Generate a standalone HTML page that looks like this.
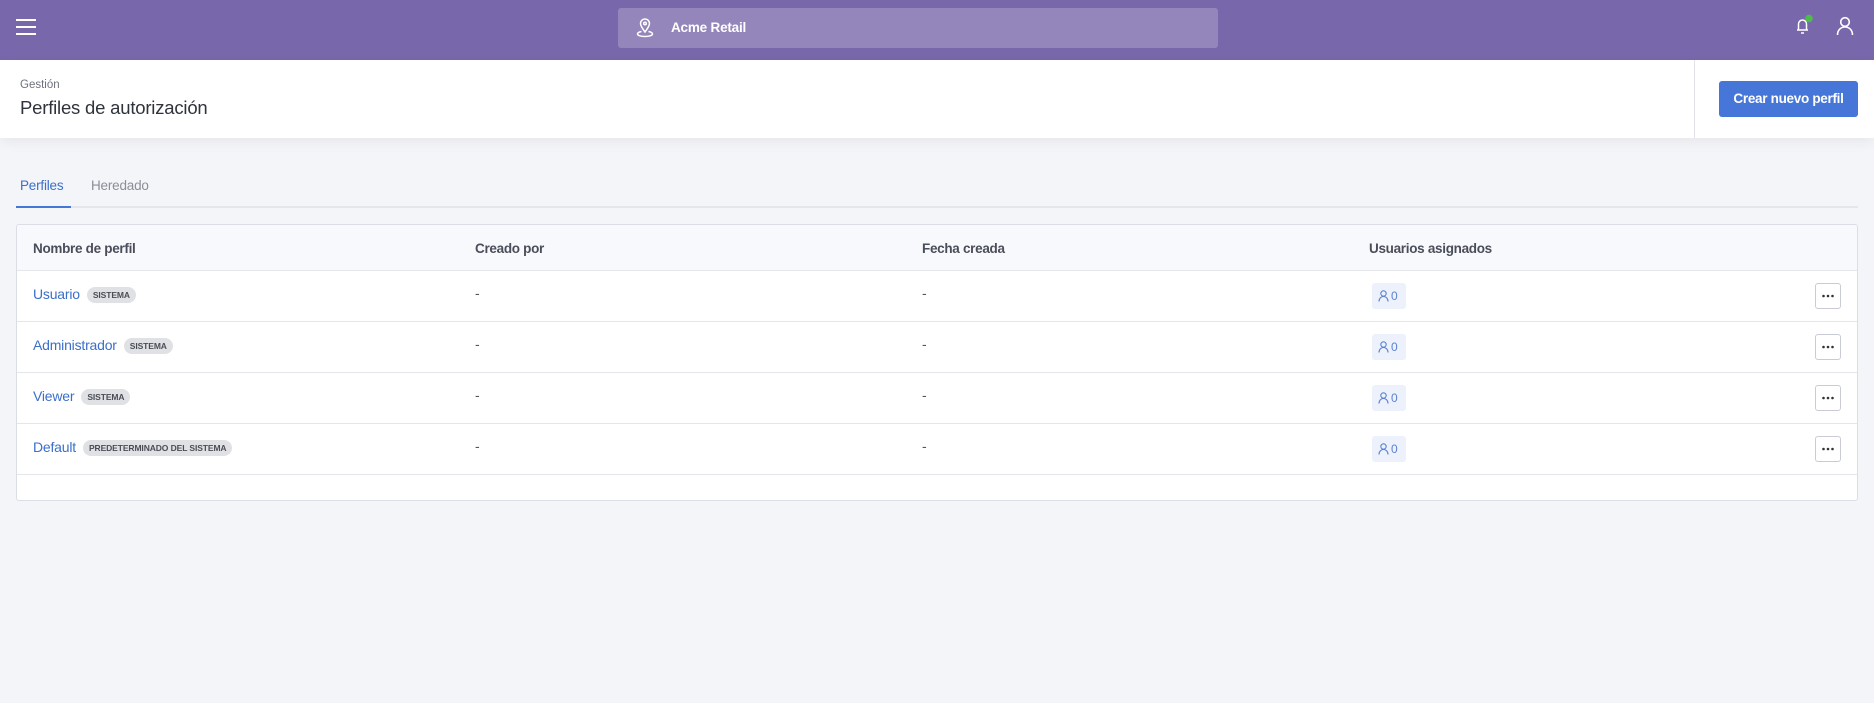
<!DOCTYPE html>
<html><head><meta charset="utf-8"><style>
*{box-sizing:border-box;margin:0;padding:0}
body{width:1874px;height:703px;background:#f4f5f9;font-family:"Liberation Sans",sans-serif;position:relative;overflow:hidden;color:#3b3f4a}
.top{position:absolute;left:0;top:0;width:1874px;height:60px;background:#7868ab}
.ham{position:absolute;left:16px;width:20px;height:2px;background:#fff}
.search{position:absolute;left:618px;top:8px;width:600px;height:40px;background:#9486bb;border-radius:3px}
.search span{position:absolute;left:53px;top:12px;color:#fff;font-weight:bold;font-size:13.5px;letter-spacing:-.2px}
.panel{position:absolute;left:0;top:60px;width:1874px;height:78px;background:#fff;box-shadow:0 4px 12px rgba(0,0,0,.06)}
.div{position:absolute;left:1694px;top:0;width:1px;height:78px;background:#e2e3e8}
.btn{position:absolute;left:1719px;top:21px;width:139px;height:36px;background:#4576d8;border-radius:3px;color:#fff;font-size:13.5px;font-weight:bold;text-align:center;line-height:36px;letter-spacing:-.3px}
.tab{position:absolute;top:178px;font-size:13.5px;letter-spacing:-.2px}
.tabline{position:absolute;left:16px;top:206px;width:1842px;height:2px;background:#e4e6ec}
.table{position:absolute;left:16px;top:224px;width:1842px;height:277px;background:#fff;border:1px solid #dcdee5;border-radius:3px;overflow:hidden}
.hdr{position:absolute;left:0;top:0;width:100%;height:46px;background:#f8f9fc;border-bottom:1px solid #e4e6ec}
.th{position:absolute;top:16px;font-size:13.5px;font-weight:bold;color:#4a4e5a;letter-spacing:-.3px}
.row{position:absolute;left:0;width:100%;height:51px;border-bottom:1px solid #e4e6ec}
.name{position:absolute;left:16px;top:15px;color:#3b6fc9;font-size:14px;letter-spacing:-.2px}
.tag{display:inline-block;margin-left:7px;background:#e0e1e5;color:#4a4d55;font-size:8.5px;font-weight:bold;padding:3px 6px;border-radius:8px;vertical-align:1px;letter-spacing:-.1px}
.dash{position:absolute;top:14px;font-size:14px;color:#555}
.cnt{position:absolute;left:1355px;top:12px;width:34px;height:26px;background:#edf1fb;border-radius:3px;color:#5b82d0;font-size:12px}
.cnt span{position:absolute;left:19px;top:6px}
.more{position:absolute;left:1798px;top:12px;width:26px;height:26px;border:1px solid #c9ccd4;border-radius:3px;background:#fff}
</style></head><body>
<div class="top">
<div class="ham" style="top:19px"></div><div class="ham" style="top:26px"></div><div class="ham" style="top:33px"></div>
<div class="search"><svg style="position:absolute;left:18px;top:9px" width="18" height="21" viewBox="0 0 18 21" fill="none" stroke="#fff" stroke-width="1.5"><path d="M9 15C6 11 4.5 8.5 4.5 6.5a4.5 4.5 0 0 1 9 0C13.5 8.5 12 11 9 15z"/><circle cx="9" cy="6.5" r="1.3"/><path d="M5.5 14.5C3 15 1.5 16 1.5 17c0 1.5 3.5 2.5 7.5 2.5s7.5-1 7.5-2.5c0-1-1.5-2-4-2.5"/></svg><span>Acme Retail</span></div>
<svg style="position:absolute;left:1793px;top:14px" width="22" height="22" viewBox="0 0 22 22" fill="none" stroke="#fff" stroke-width="1.5"><path d="M4 16h11M5.5 16V10a4 4 0 0 1 8 0v6M8 19h3"/><circle cx="16" cy="4.5" r="3.8" fill="#4cbd4a" stroke="none"/></svg>
<svg style="position:absolute;left:1836px;top:16px" width="18" height="20" viewBox="0 0 18 20" fill="none" stroke="#fff" stroke-width="1.6"><circle cx="9" cy="6" r="4.3"/><path d="M1.5 19c0-5 3.3-8 7.5-8s7.5 3 7.5 8"/></svg>
</div>
<div class="panel">
<div style="position:absolute;left:20px;top:19px;font-size:11.5px;color:#6e727c">Gestión</div>
<div style="position:absolute;left:20px;top:37px;font-size:18.5px;color:#2f333c;letter-spacing:-.2px">Perfiles de autorización</div>
<div class="div"></div>
<div class="btn">Crear nuevo perfil</div>
</div>
<div class="tab" style="left:20px;color:#3b6fc9">Perfiles</div>
<div class="tab" style="left:91px;color:#8a8e97">Heredado</div>
<div class="tabline"></div>
<div style="position:absolute;left:16px;top:206px;width:55px;height:2px;background:#4576d8"></div>
<div class="table">
<div class="hdr">
<div class="th" style="left:16px">Nombre de perfil</div>
<div class="th" style="left:458px">Creado por</div>
<div class="th" style="left:905px">Fecha creada</div>
<div class="th" style="left:1352px">Usuarios asignados</div>
</div>
<div class="row" style="top:46px"><div class="name">Usuario<span class="tag">SISTEMA</span></div><div class="dash" style="left:458px">-</div><div class="dash" style="left:905px">-</div><div class="cnt"><svg style="position:absolute;left:6px;top:7px" width="11" height="12" viewBox="0 0 11 12" fill="none" stroke="#5b82d0" stroke-width="1.1"><circle cx="5.5" cy="3.5" r="2.7"/><path d="M1 11.5c0-3 2-5 4.5-5s4.5 2 4.5 5"/></svg><span>0</span></div><div class="more"><svg width="24" height="24"><circle cx="7.5" cy="12" r="1.3" fill="#333"/><circle cx="12" cy="12" r="1.3" fill="#333"/><circle cx="16.5" cy="12" r="1.3" fill="#333"/></svg></div></div>
<div class="row" style="top:97px"><div class="name">Administrador<span class="tag">SISTEMA</span></div><div class="dash" style="left:458px">-</div><div class="dash" style="left:905px">-</div><div class="cnt"><svg style="position:absolute;left:6px;top:7px" width="11" height="12" viewBox="0 0 11 12" fill="none" stroke="#5b82d0" stroke-width="1.1"><circle cx="5.5" cy="3.5" r="2.7"/><path d="M1 11.5c0-3 2-5 4.5-5s4.5 2 4.5 5"/></svg><span>0</span></div><div class="more"><svg width="24" height="24"><circle cx="7.5" cy="12" r="1.3" fill="#333"/><circle cx="12" cy="12" r="1.3" fill="#333"/><circle cx="16.5" cy="12" r="1.3" fill="#333"/></svg></div></div>
<div class="row" style="top:148px"><div class="name">Viewer<span class="tag">SISTEMA</span></div><div class="dash" style="left:458px">-</div><div class="dash" style="left:905px">-</div><div class="cnt"><svg style="position:absolute;left:6px;top:7px" width="11" height="12" viewBox="0 0 11 12" fill="none" stroke="#5b82d0" stroke-width="1.1"><circle cx="5.5" cy="3.5" r="2.7"/><path d="M1 11.5c0-3 2-5 4.5-5s4.5 2 4.5 5"/></svg><span>0</span></div><div class="more"><svg width="24" height="24"><circle cx="7.5" cy="12" r="1.3" fill="#333"/><circle cx="12" cy="12" r="1.3" fill="#333"/><circle cx="16.5" cy="12" r="1.3" fill="#333"/></svg></div></div>
<div class="row" style="top:199px"><div class="name">Default<span class="tag">PREDETERMINADO DEL SISTEMA</span></div><div class="dash" style="left:458px">-</div><div class="dash" style="left:905px">-</div><div class="cnt"><svg style="position:absolute;left:6px;top:7px" width="11" height="12" viewBox="0 0 11 12" fill="none" stroke="#5b82d0" stroke-width="1.1"><circle cx="5.5" cy="3.5" r="2.7"/><path d="M1 11.5c0-3 2-5 4.5-5s4.5 2 4.5 5"/></svg><span>0</span></div><div class="more"><svg width="24" height="24"><circle cx="7.5" cy="12" r="1.3" fill="#333"/><circle cx="12" cy="12" r="1.3" fill="#333"/><circle cx="16.5" cy="12" r="1.3" fill="#333"/></svg></div></div>
</div>
</body></html>
